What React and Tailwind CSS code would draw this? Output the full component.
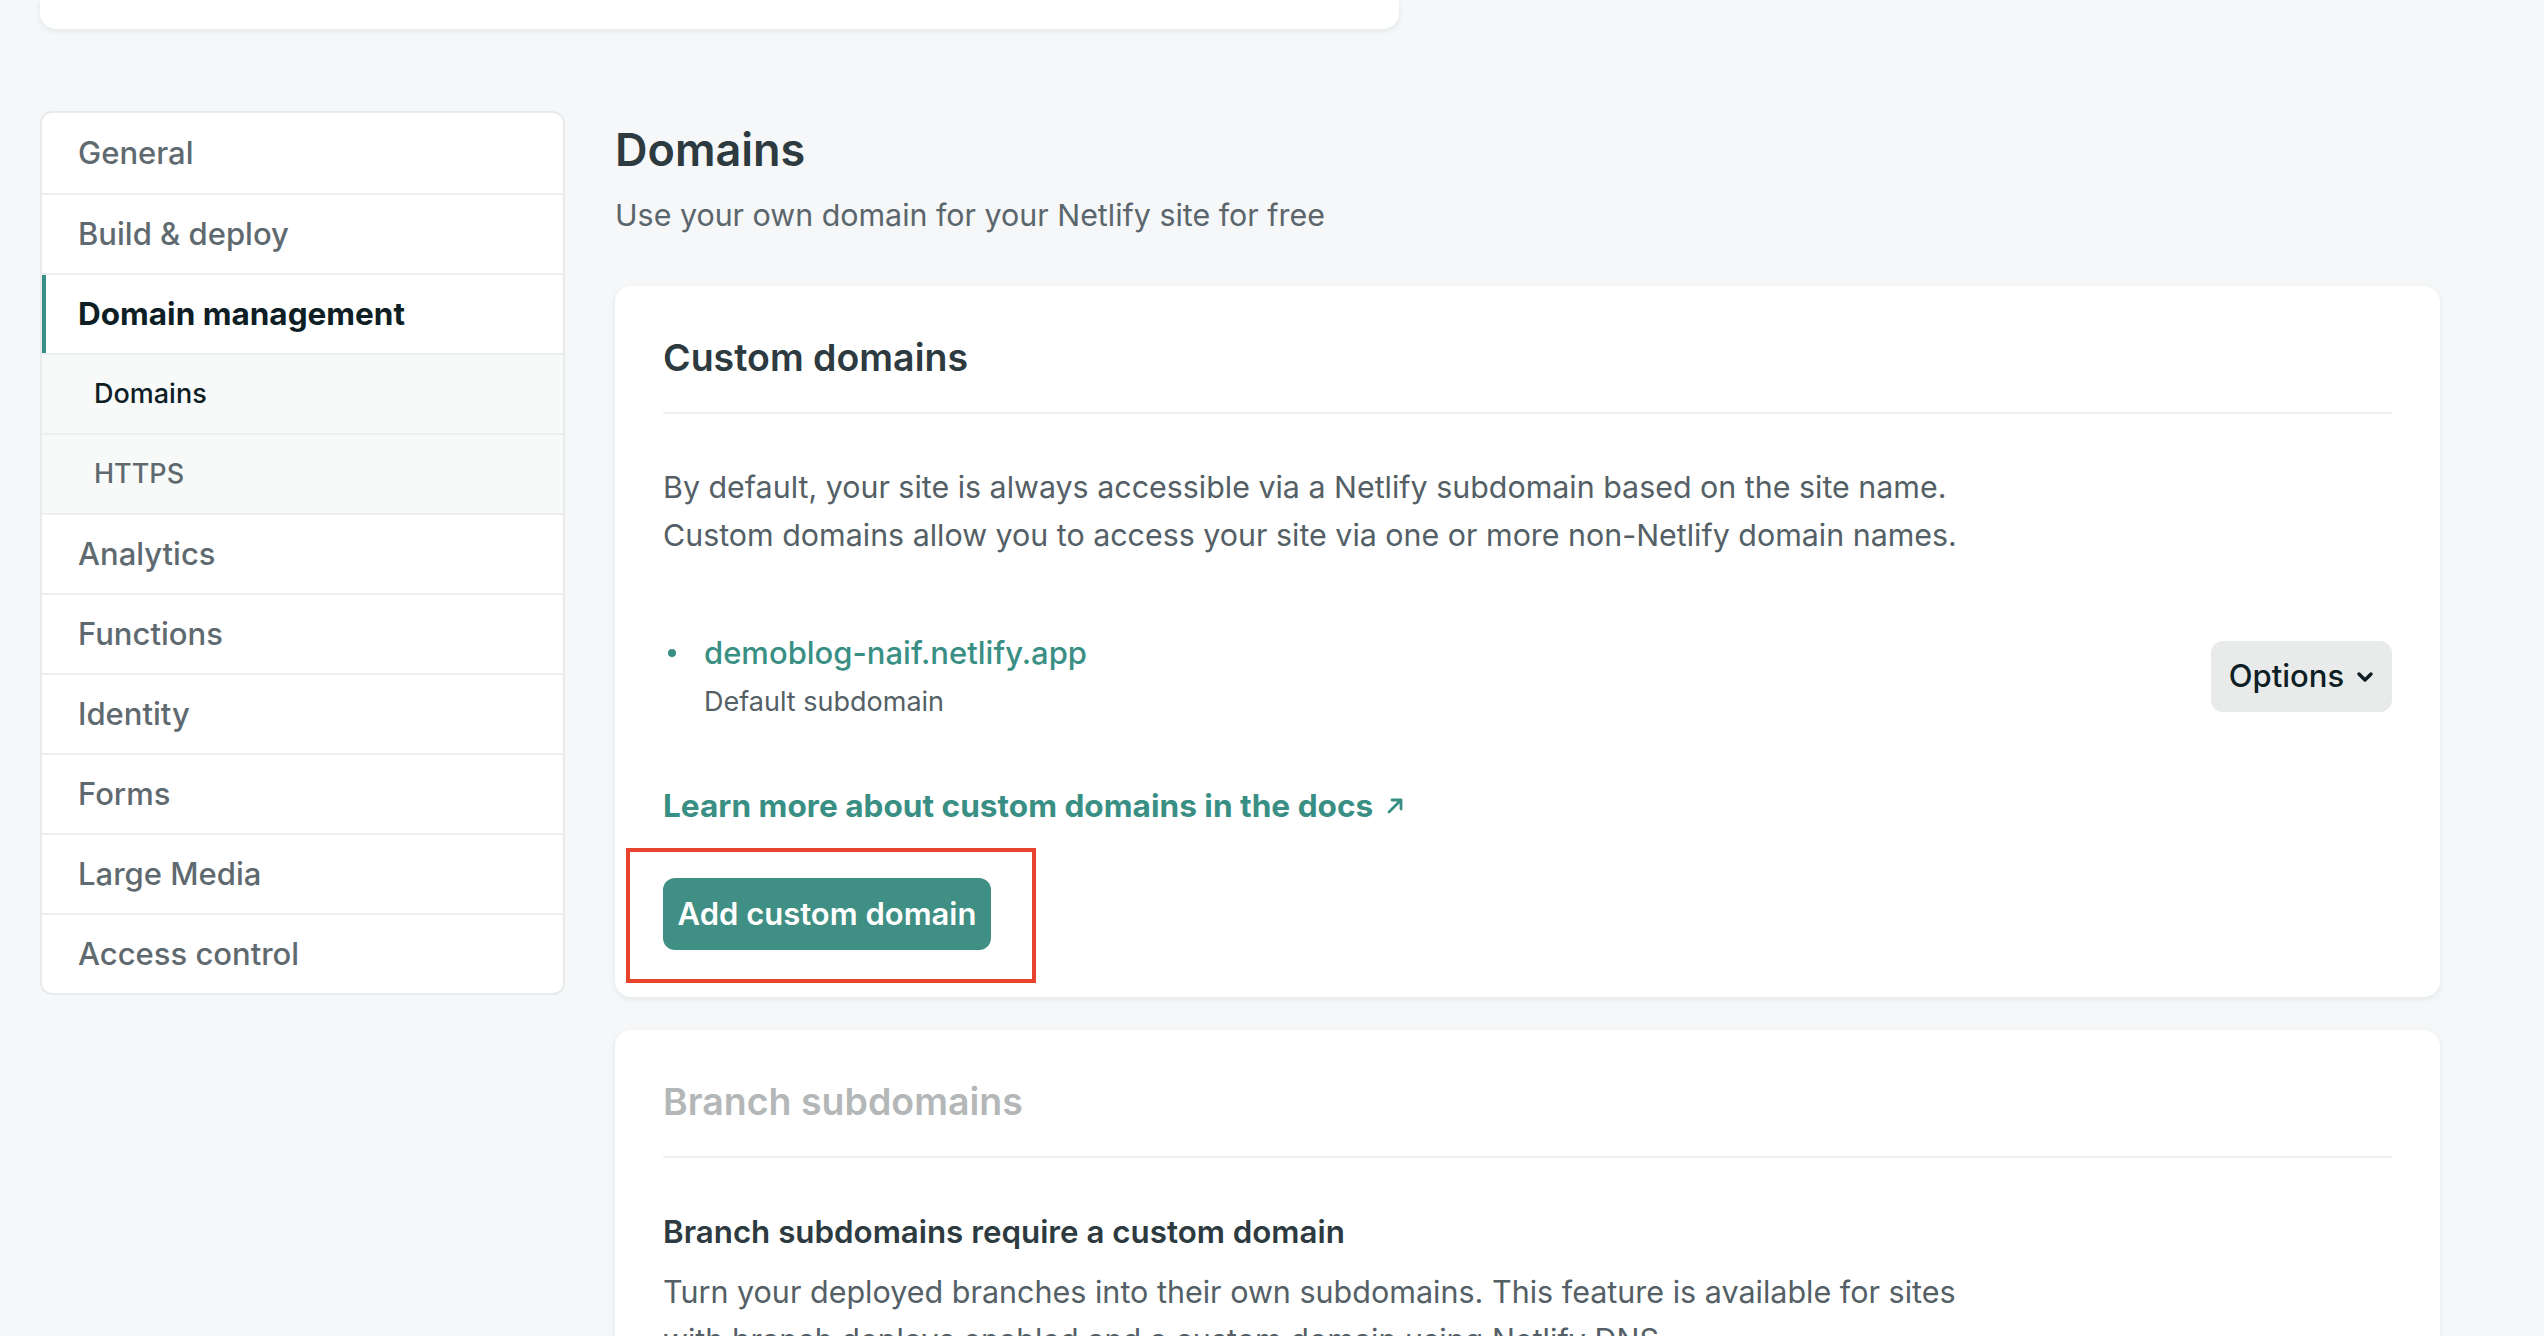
import React from "react";

const navTop = [
  { label: "General" },
  { label: "Build & deploy" },
  { label: "Domain management", active: true },
  { label: "Domains", sub: true, current: true },
  { label: "HTTPS", sub: true },
  { label: "Analytics" },
  { label: "Functions" },
  { label: "Identity" },
  { label: "Forms" },
  { label: "Large Media" },
  { label: "Access control" },
];

const Sidebar = () => (
  <nav className="w-[525px] shrink-0 overflow-hidden rounded-xl border-2 border-[#e8eaeb] bg-white">
    {navTop.map((item, i) => (
      <div
        key={item.label}
        className={
          "relative flex h-[80px] items-center " +
          (i > 0 ? "border-t-2 border-[#eceeef] " : "") +
          (item.sub ? "bg-[#f8fafa] pl-[52px] " : "pl-[36px] ")
        }
      >
        {item.active && (
          <span className="absolute left-0 top-0 h-full w-[4px] bg-[#3a8f84]" />
        )}
        <span
          className={
            item.active
              ? "text-[31.5px] font-bold text-[#0e1e25]"
              : item.sub
              ? item.current
                ? "text-[27px] font-medium text-[#0e1e25]"
                : "text-[27px] font-medium text-[#5f6a70]"
              : "text-[31px] font-medium text-[#5f6a70]"
          }
        >
          {item.label}
        </span>
      </div>
    ))}
  </nav>
);

const CardHeader = ({ title, muted }) => (
  <div>
    <h2
      className={
        "text-[37.5px] font-semibold leading-[44px] " +
        (muted ? "text-[#b4b7b8]" : "text-[#2d3a40]")
      }
    >
      {title}
    </h2>
    <div className="mt-[32px] h-[2px] bg-[#eff1f1]" />
  </div>
);

const CustomDomains = () => (
  <section className="rounded-2xl bg-white px-[48px] pb-[47px] pt-[50px] shadow-[0_2px_6px_rgba(30,50,60,0.08)]">
    <CardHeader title="Custom domains" />
    <p className="mt-[49px] text-[30.4px] leading-[48px] text-[#545f66]">
      By default, your site is always accessible via a Netlify subdomain based on the site name.
      <br />
      Custom domains allow you to access your site via one or more non-Netlify domain names.
    </p>

    <div className="mt-[74px] flex items-center justify-between">
      <div className="flex">
        <span className="mt-[16px] ml-[5px] mr-[28px] h-[8px] w-[8px] shrink-0 rounded-full bg-[#3a8f84]" />
        <div>
          <a className="block text-[31px] font-medium leading-[40px] text-[#3a8f84]">
            demoblog-naif.netlify.app
          </a>
          <p className="mt-[11px] text-[27px] leading-[36px] text-[#545f66]">
            Default subdomain
          </p>
        </div>
      </div>
      <button className="flex h-[71px] w-[181px] items-center justify-center gap-[12px] rounded-[12px] bg-[#e9ebeb] text-[31px] font-medium text-[#0e1e25]">
        Options
        <svg width="18" height="14" viewBox="0 0 18 14" fill="none">
          <path d="M3 4l6 6 6-6" stroke="#0e1e25" strokeWidth="3.5" strokeLinecap="round" strokeLinejoin="round" />
        </svg>
      </button>
    </div>

    <a className="mt-[66px] flex items-center gap-[12px] text-[31.6px] font-bold leading-[40px] text-[#3a8f84]">
      Learn more about custom domains in the docs
      <svg width="20" height="20" viewBox="0 0 20 20" fill="none">
        <path d="M4 16L16 4M7 4h9v9" stroke="#3a8f84" strokeWidth="2.8" strokeLinecap="round" strokeLinejoin="round" />
      </svg>
    </a>

    <div className="relative mt-[52px] inline-block">
      <button className="h-[72px] w-[328px] rounded-[12px] bg-[#3f8f84] text-[31px] font-semibold text-white">
        Add custom domain
      </button>
      <span className="pointer-events-none absolute -left-[37px] -top-[30px] -right-[45px] -bottom-[33px] border-[4px] border-[#e8432c]" />
    </div>
  </section>
);

const BranchSubdomains = () => (
  <section className="rounded-2xl bg-white px-[48px] pb-[47px] pt-[50px] shadow-[0_2px_6px_rgba(30,50,60,0.08)]">
    <CardHeader title="Branch subdomains" muted />
    <h3 className="mt-[54px] text-[31.3px] font-semibold leading-[40px] text-[#2d3a40]">
      Branch subdomains require a custom domain
    </h3>
    <p className="mt-[16px] text-[30.5px] leading-[48px] text-[#545f66]">
      Turn your deployed branches into their own subdomains. This feature is available for sites
      <br />
      with branch deploys enabled and a custom domain using Netlify DNS.
    </p>
  </section>
);

export default function App() {
  return (
    <div className="h-[1336px] w-[2544px] overflow-hidden bg-[#f5f7f8] font-['Inter','Liberation_Sans',sans-serif]">
      <div className="ml-[40px] h-[29px] w-[1359px] rounded-b-2xl bg-white shadow-[0_2px_6px_rgba(30,50,60,0.08)]" />
      <div className="mt-[82px] flex items-start pl-[40px]">
        <Sidebar />
        <main className="ml-[50px] w-[1825px] pt-[11px]">
          <h1 className="text-[45px] font-semibold leading-[56px] text-[#2d3a40]">Domains</h1>
          <p className="mt-[17px] text-[30.4px] leading-[40px] text-[#5b666c]">
            Use your own domain for your Netlify site for free
          </p>
          <div className="mt-[51px] flex flex-col gap-[33px]">
            <CustomDomains />
            <BranchSubdomains />
          </div>
        </main>
      </div>
    </div>
  );
}
